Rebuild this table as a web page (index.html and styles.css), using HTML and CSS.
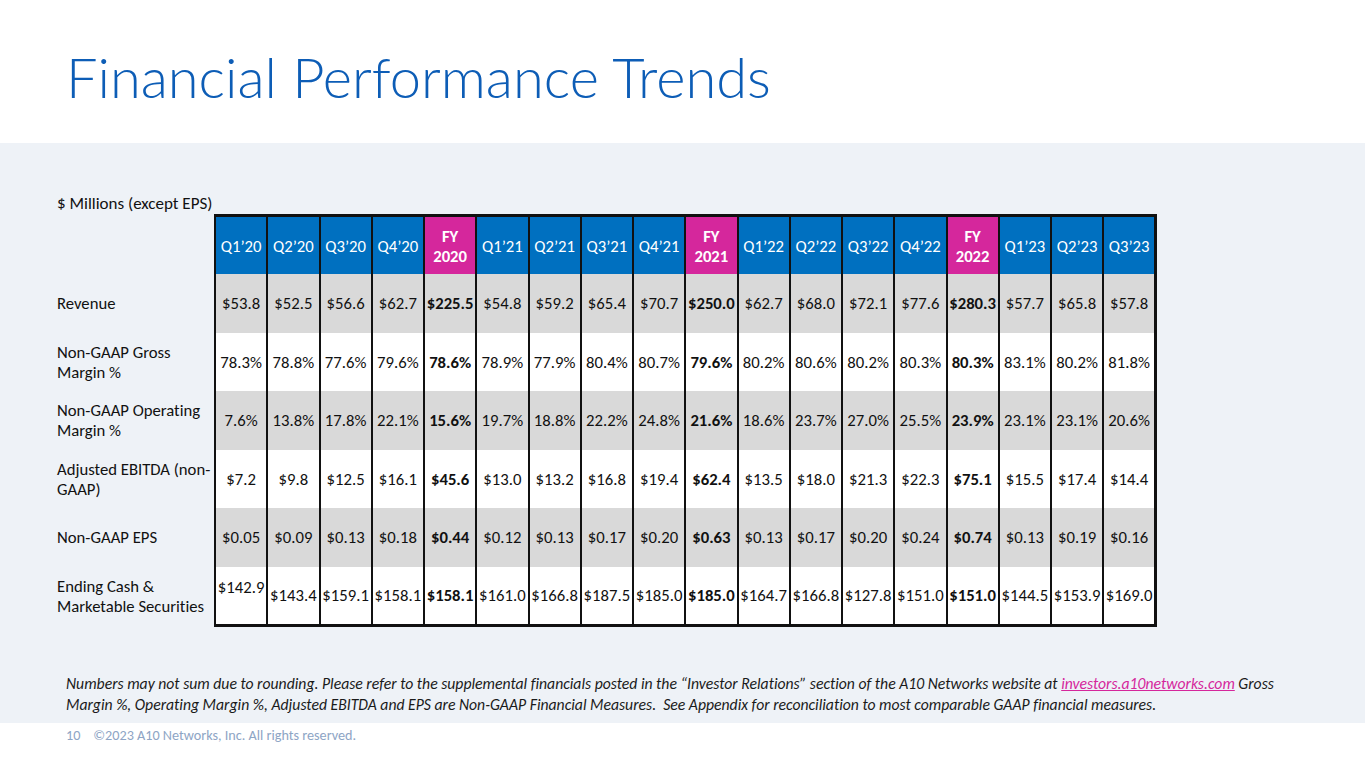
FILE: index.html
```html
<!DOCTYPE html>
<html>
<head>
<meta charset="utf-8">
<title>Financial Performance Trends</title>
<link rel="stylesheet" href="styles.css">
</head>
<body>
<header class="top">
  <h1 class="title">Financial Performance Trends</h1>
</header>
<main class="band">
  <div class="caption">$ Millions (except EPS)</div>
  <table class="fin">
    <colgroup><col class="c-label"><col span="18"></colgroup>
    <thead>
      <tr>
        <th class="label"></th>
        <th>Q1’20</th><th>Q2’20</th><th>Q3’20</th><th>Q4’20</th><th class="fy">FY<br>2020</th>
        <th>Q1’21</th><th>Q2’21</th><th>Q3’21</th><th>Q4’21</th><th class="fy">FY<br>2021</th>
        <th>Q1’22</th><th>Q2’22</th><th>Q3’22</th><th>Q4’22</th><th class="fy">FY<br>2022</th>
        <th>Q1’23</th><th>Q2’23</th><th class="last">Q3’23</th>
      </tr>
    </thead>
    <tbody>
      <tr class="shade">
        <th class="label">Revenue</th>
        <td>$53.8</td><td>$52.5</td><td>$56.6</td><td>$62.7</td><td class="b">$225.5</td>
        <td>$54.8</td><td>$59.2</td><td>$65.4</td><td>$70.7</td><td class="b">$250.0</td>
        <td>$62.7</td><td>$68.0</td><td>$72.1</td><td>$77.6</td><td class="b">$280.3</td>
        <td>$57.7</td><td>$65.8</td><td class="last">$57.8</td>
      </tr>
      <tr>
        <th class="label">Non-GAAP Gross<br>Margin %</th>
        <td>78.3%</td><td>78.8%</td><td>77.6%</td><td>79.6%</td><td class="b">78.6%</td>
        <td>78.9%</td><td>77.9%</td><td>80.4%</td><td>80.7%</td><td class="b">79.6%</td>
        <td>80.2%</td><td>80.6%</td><td>80.2%</td><td>80.3%</td><td class="b">80.3%</td>
        <td>83.1%</td><td>80.2%</td><td class="last">81.8%</td>
      </tr>
      <tr class="shade">
        <th class="label">Non-GAAP Operating<br>Margin %</th>
        <td>7.6%</td><td>13.8%</td><td>17.8%</td><td>22.1%</td><td class="b">15.6%</td>
        <td>19.7%</td><td>18.8%</td><td>22.2%</td><td>24.8%</td><td class="b">21.6%</td>
        <td>18.6%</td><td>23.7%</td><td>27.0%</td><td>25.5%</td><td class="b">23.9%</td>
        <td>23.1%</td><td>23.1%</td><td class="last">20.6%</td>
      </tr>
      <tr>
        <th class="label">Adjusted EBITDA (non-<br>GAAP)</th>
        <td>$7.2</td><td>$9.8</td><td>$12.5</td><td>$16.1</td><td class="b">$45.6</td>
        <td>$13.0</td><td>$13.2</td><td>$16.8</td><td>$19.4</td><td class="b">$62.4</td>
        <td>$13.5</td><td>$18.0</td><td>$21.3</td><td>$22.3</td><td class="b">$75.1</td>
        <td>$15.5</td><td>$17.4</td><td class="last">$14.4</td>
      </tr>
      <tr class="shade">
        <th class="label">Non-GAAP EPS</th>
        <td>$0.05</td><td>$0.09</td><td>$0.13</td><td>$0.18</td><td class="b">$0.44</td>
        <td>$0.12</td><td>$0.13</td><td>$0.17</td><td>$0.20</td><td class="b">$0.63</td>
        <td>$0.13</td><td>$0.17</td><td>$0.20</td><td>$0.24</td><td class="b">$0.74</td>
        <td>$0.13</td><td>$0.19</td><td class="last">$0.16</td>
      </tr>
      <tr class="final">
        <th class="label">Ending Cash &amp;<br>Marketable Securities</th>
        <td class="top-cell">$142.9</td><td>$143.4</td><td>$159.1</td><td>$158.1</td><td class="b">$158.1</td>
        <td>$161.0</td><td>$166.8</td><td>$187.5</td><td>$185.0</td><td class="b">$185.0</td>
        <td>$164.7</td><td>$166.8</td><td>$127.8</td><td>$151.0</td><td class="b">$151.0</td>
        <td>$144.5</td><td>$153.9</td><td class="last">$169.0</td>
      </tr>
    </tbody>
  </table>
  <p class="note">Numbers may not sum due to rounding. Please refer to the supplemental financials posted in the “Investor Relations” section of the A10 Networks website at <a class="link" href="#">investors.a10networks.com</a> Gross<br>Margin %, Operating Margin %, Adjusted EBITDA and EPS are Non-GAAP Financial Measures.&nbsp; See Appendix for reconciliation to most comparable GAAP financial measures.</p>
</main>
<footer class="foot">
  <span class="pg">10</span>
  <span class="copy">©2023 A10 Networks, Inc. All rights reserved.</span>
</footer>
</body>
</html>
```

FILE: styles.css
```css
html, body {
  margin: 0;
  padding: 0;
}
body {
  width: 1365px;
  height: 768px;
  overflow: hidden;
  background: #ffffff;
  font-family: Carlito, "Open Sans", sans-serif;
  font-variant-ligatures: no-common-ligatures;
  color: #111111;
}
.top {
  height: 143px;
  box-sizing: border-box;
  padding: 47px 0 0 66px;
}
.title {
  margin: 0;
  font-family: Lato, Carlito, sans-serif;
  font-weight: 300;
  font-size: 56px;
  line-height: 60px;
  color: #0d5db6;
  letter-spacing: 0;
}
.band {
  background: #eef2f7;
  height: 580px;
  box-sizing: border-box;
  padding: 51px 0 0 57px;
}
.caption {
  font-size: 17px;
  line-height: 20px;
}
.fin {
  width: 1100px;
  border-collapse: collapse;
  table-layout: fixed;
  font-size: 16.7px;
  line-height: 20px;
}
.c-label {
  width: 158px;
}
.fin th,
.fin td {
  padding: 0;
  text-align: center;
  vertical-align: middle;
  white-space: nowrap;
}
.fin thead th {
  height: 57px;
  background: #0070c0;
  color: #ffffff;
  font-weight: 400;
  border-top: 3px solid #111111;
  border-left: 2px solid #111111;
  border-right: 2px solid #111111;
}
.fin thead th.fy {
  background: #d5279c;
  font-weight: 700;
}
.fin thead th.label,
.fin tbody th.label {
  background: transparent;
  border: none;
  text-align: left;
  font-weight: 400;
  white-space: nowrap;
}
.fin tbody tr {
  height: 58.5px;
}
.fin td {
  background: #ffffff;
  border-left: 2px solid #111111;
  border-right: 2px solid #111111;
}
.fin tr.shade td {
  background: #d9d9d9;
}
.fin td.b {
  font-weight: 700;
}
.fin .last {
  border-right: 3px solid #111111;
}
.fin tr.final td {
  border-bottom: 3px solid #111111;
}
.fin td.top-cell {
  vertical-align: top;
  padding-top: 10px;
}
.note {
  margin: 46px 0 0 9px;
  font-style: italic;
  font-size: 15.7px;
  line-height: 21px;
  color: #1a1a1a;
}
.link {
  color: #d5279c;
  text-decoration: underline;
}
.foot {
  height: 45px;
  box-sizing: border-box;
  padding: 4px 0 0 66px;
  font-size: 14.2px;
  line-height: 16px;
  color: #8ea5c5;
}
.pg {
  display: inline-block;
  width: 24px;
}
```
